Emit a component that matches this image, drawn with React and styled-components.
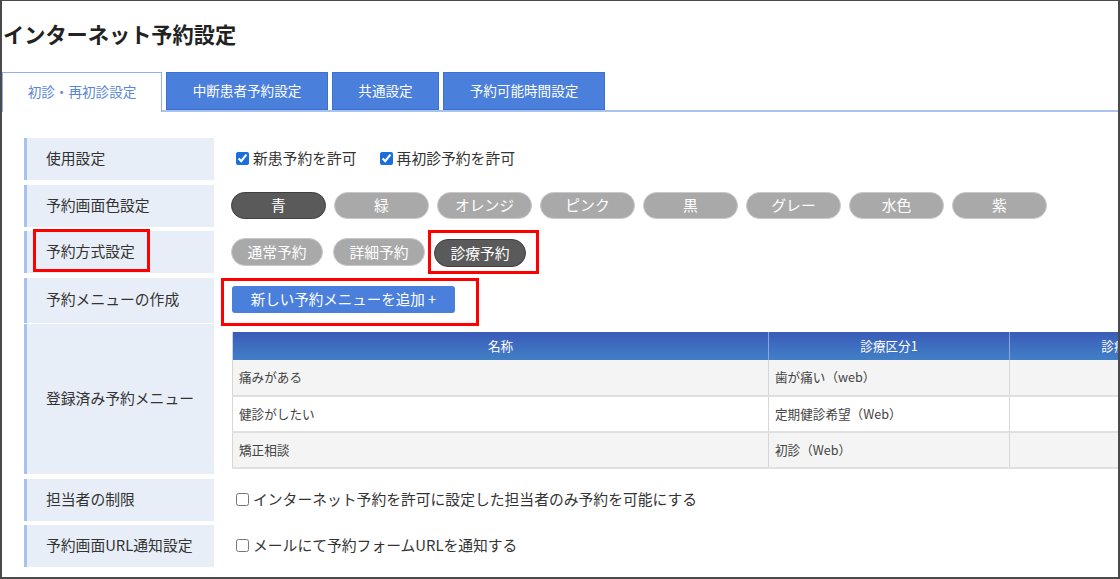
import React from "react";
import styled, { createGlobalStyle } from "styled-components";

const Global = createGlobalStyle`
  html, body { margin: 0; padding: 0; background: #fff; }
  body { font-family: "Noto Sans CJK JP", "Noto Sans", sans-serif; color: #333; }
  * { box-sizing: border-box; }
`;

const Frame = styled.div`
  width: 1120px;
  height: 579px;
  border-style: solid;
  border-color: #4a4a4a;
  border-width: 1px 2px 2px 2px;
  overflow: hidden;
  background: #fff;
`;

const Title = styled.h1`
  margin: 0;
  height: 71px;
  padding: 20px 0 0 1px;
  font-size: 21.2px;
  line-height: 26px;
  font-weight: 700;
  color: #222;
`;

const TabBar = styled.div`
  display: flex;
  gap: 4px;
  height: 40px;
  border-bottom: 2px solid #a9c3ef;
`;

const Tab = styled.div`
  width: ${(p) => p.$w}px;
  height: ${(p) => (p.$active ? 40 : 38)}px;
  margin-bottom: ${(p) => (p.$active ? -2 : 0)}px;
  display: flex;
  align-items: center;
  justify-content: center;
  padding-bottom: 3px;
  font-size: 13.6px;
  background: ${(p) => (p.$active ? "#fff" : "#4a7fdb")};
  color: ${(p) => (p.$active ? "#5a86d8" : "#fff")};
  border: 1px solid ${(p) => (p.$active ? "#8fb1ec" : "#3d6fd2")};
  border-bottom: ${(p) => (p.$active ? "none" : "1px solid #3d6fd2")};
`;

const Rows = styled.div`
  display: flex;
  flex-direction: column;
  gap: 4.5px;
  padding: 26px 0 0 22px;
`;

const Row = styled.div`
  display: grid;
  grid-template-columns: 190px 1fr;
  column-gap: 18px;
  height: ${(p) => p.$h || 42}px;
`;

const Label = styled.div`
  display: flex;
  align-items: center;
  padding: 0 0 3px 19px;
  background: #e8eef7;
  border-left: 3px solid #a8c2ef;
  font-size: 14.8px;
  color: #333;
`;

const Content = styled.div`
  display: flex;
  align-items: ${(p) => (p.$top ? "flex-start" : "center")};
  padding-top: ${(p) => (p.$top ? 8 : 0)}px;
  gap: ${(p) => p.$gap || 0}px;
  min-width: 0;
`;

const Check = styled.label`
  display: inline-flex;
  align-items: center;
  gap: 4px;
  margin-left: 4px;
  margin-right: ${(p) => p.$mr || 0}px;
  padding-bottom: 3px;
  font-size: 14.8px;
  color: #333;
  input {
    margin: 2px 0 0 0;
    width: 13px;
    height: 13px;
    accent-color: #1b6fdc;
  }
`;

const Pill = styled.div`
  width: ${(p) => p.$w}px;
  height: ${(p) => p.$h}px;
  border-radius: 15px;
  display: flex;
  align-items: center;
  justify-content: center;
  padding-bottom: 2px;
  font-size: 14.8px;
  color: #fff;
  background: ${(p) => (p.$on ? "#5a5a5a" : "#a9a9a9")};
  border: 1px solid ${(p) => (p.$on ? "#3f3f3f" : "#c9c9c9")};
  flex-shrink: 0;
`;

const Marker = styled.div`
  display: inline-flex;
  align-items: center;
  outline: 3px solid #ff0000;
  padding: ${(p) => p.$pad};
  margin-left: ${(p) => p.$ml || 0}px;
  height: ${(p) => (p.$h ? p.$h + "px" : "auto")};
  align-self: ${(p) => (p.$start ? "flex-start" : "auto")};
  margin-top: ${(p) => p.$mt || 0}px;
  flex-shrink: 0;
`;

const AddButton = styled.button`
  width: 223px;
  height: 27px;
  border: none;
  border-radius: 3px;
  background: #4a7fdc;
  color: #fff;
  font-family: inherit;
  font-size: 14.5px;
  padding: 0 0 2px 0;
`;

const Table = styled.table`
  border-collapse: collapse;
  table-layout: fixed;
  width: 1260px;
  flex-shrink: 0;
  font-size: 12.6px;
`;

const Th = styled.th`
  height: 28px;
  padding: 0 0 2px 0;
  font-weight: 400;
  color: #fff;
  text-align: center;
  background: linear-gradient(#3a5bb8, #417fc6);
  border-left: 1px solid #8aa6da;
  &:first-child { border-left: 1px solid #c8d3e6; }
`;

const Td = styled.td`
  height: 36px;
  padding: 0 0 2px 6px;
  color: #444;
  background: ${(p) => (p.$alt ? "#f4f4f4" : "#fff")};
  border-left: 1px solid #d6d6d6;
  border-bottom: 2px solid #e0e0e0;
  white-space: nowrap;
`;

const colors = ["青", "緑", "オレンジ", "ピンク", "黒", "グレー", "水色", "紫"];
const menus = [
  ["痛みがある", "歯が痛い（web）"],
  ["健診がしたい", "定期健診希望（Web）"],
  ["矯正相談", "初診（Web）"],
];

export default function App() {
  return (
    <>
      <Global />
      <Frame>
        <Title>インターネット予約設定</Title>
        <TabBar>
          <Tab $w={160} $active>初診・再初診設定</Tab>
          <Tab $w={162}>中断患者予約設定</Tab>
          <Tab $w={107}>共通設定</Tab>
          <Tab $w={162}>予約可能時間設定</Tab>
        </TabBar>
        <Rows>
          <Row>
            <Label>使用設定</Label>
            <Content>
              <Check $mr={19}>
                <input type="checkbox" defaultChecked />
                新患予約を許可
              </Check>
              <Check>
                <input type="checkbox" defaultChecked />
                再初診予約を許可
              </Check>
            </Content>
          </Row>
          <Row>
            <Label>予約画面色設定</Label>
            <Content $gap={8} style={{ marginLeft: -1 }}>
              {colors.map((c, i) => (
                <Pill key={c} $w={95} $h={27} $on={i === 0}>
                  {c}
                </Pill>
              ))}
            </Content>
          </Row>
          <Row>
            <Label>
              <Marker $pad="0 12px 0 10px" $ml={-10} $h={37}>
                予約方式設定
              </Marker>
            </Label>
            <Content $gap={10} style={{ marginLeft: -1 }}>
              <Pill $w={92} $h={28}>通常予約</Pill>
              <Pill $w={92} $h={28}>詳細予約</Pill>
              <Marker $pad="6px 10px 4px 3px" $ml={-4}>
                <Pill $w={92} $h={28} $on>
                  診療予約
                </Pill>
              </Marker>
            </Content>
          </Row>
          <Row>
            <Label>予約メニューの作成</Label>
            <Content>
              <Marker $pad="5px 21px 10px 8px" $ml={-8} $start $mt={3}>
                <AddButton>新しい予約メニューを追加 +</AddButton>
              </Marker>
            </Content>
          </Row>
          <Row $h={150}>
            <Label>登録済み予約メニュー</Label>
            <Content $top>
              <Table>
                <colgroup>
                  <col style={{ width: 536 }} />
                  <col style={{ width: 241 }} />
                  <col style={{ width: 241 }} />
                  <col style={{ width: 242 }} />
                </colgroup>
                <thead>
                  <tr>
                    <Th>名称</Th>
                    <Th>診療区分1</Th>
                    <Th>診療区分2</Th>
                    <Th>診療区分3</Th>
                  </tr>
                </thead>
                <tbody>
                  {menus.map(([name, kind], i) => (
                    <tr key={name}>
                      <Td $alt={i !== 1}>{name}</Td>
                      <Td $alt={i !== 1}>{kind}</Td>
                      <Td $alt={i !== 1}></Td>
                      <Td $alt={i !== 1}></Td>
                    </tr>
                  ))}
                </tbody>
              </Table>
            </Content>
          </Row>
          <Row>
            <Label>担当者の制限</Label>
            <Content>
              <Check>
                <input type="checkbox" />
                インターネット予約を許可に設定した担当者のみ予約を可能にする
              </Check>
            </Content>
          </Row>
          <Row>
            <Label>予約画面URL通知設定</Label>
            <Content>
              <Check>
                <input type="checkbox" />
                メールにて予約フォームURLを通知する
              </Check>
            </Content>
          </Row>
        </Rows>
      </Frame>
    </>
  );
}
